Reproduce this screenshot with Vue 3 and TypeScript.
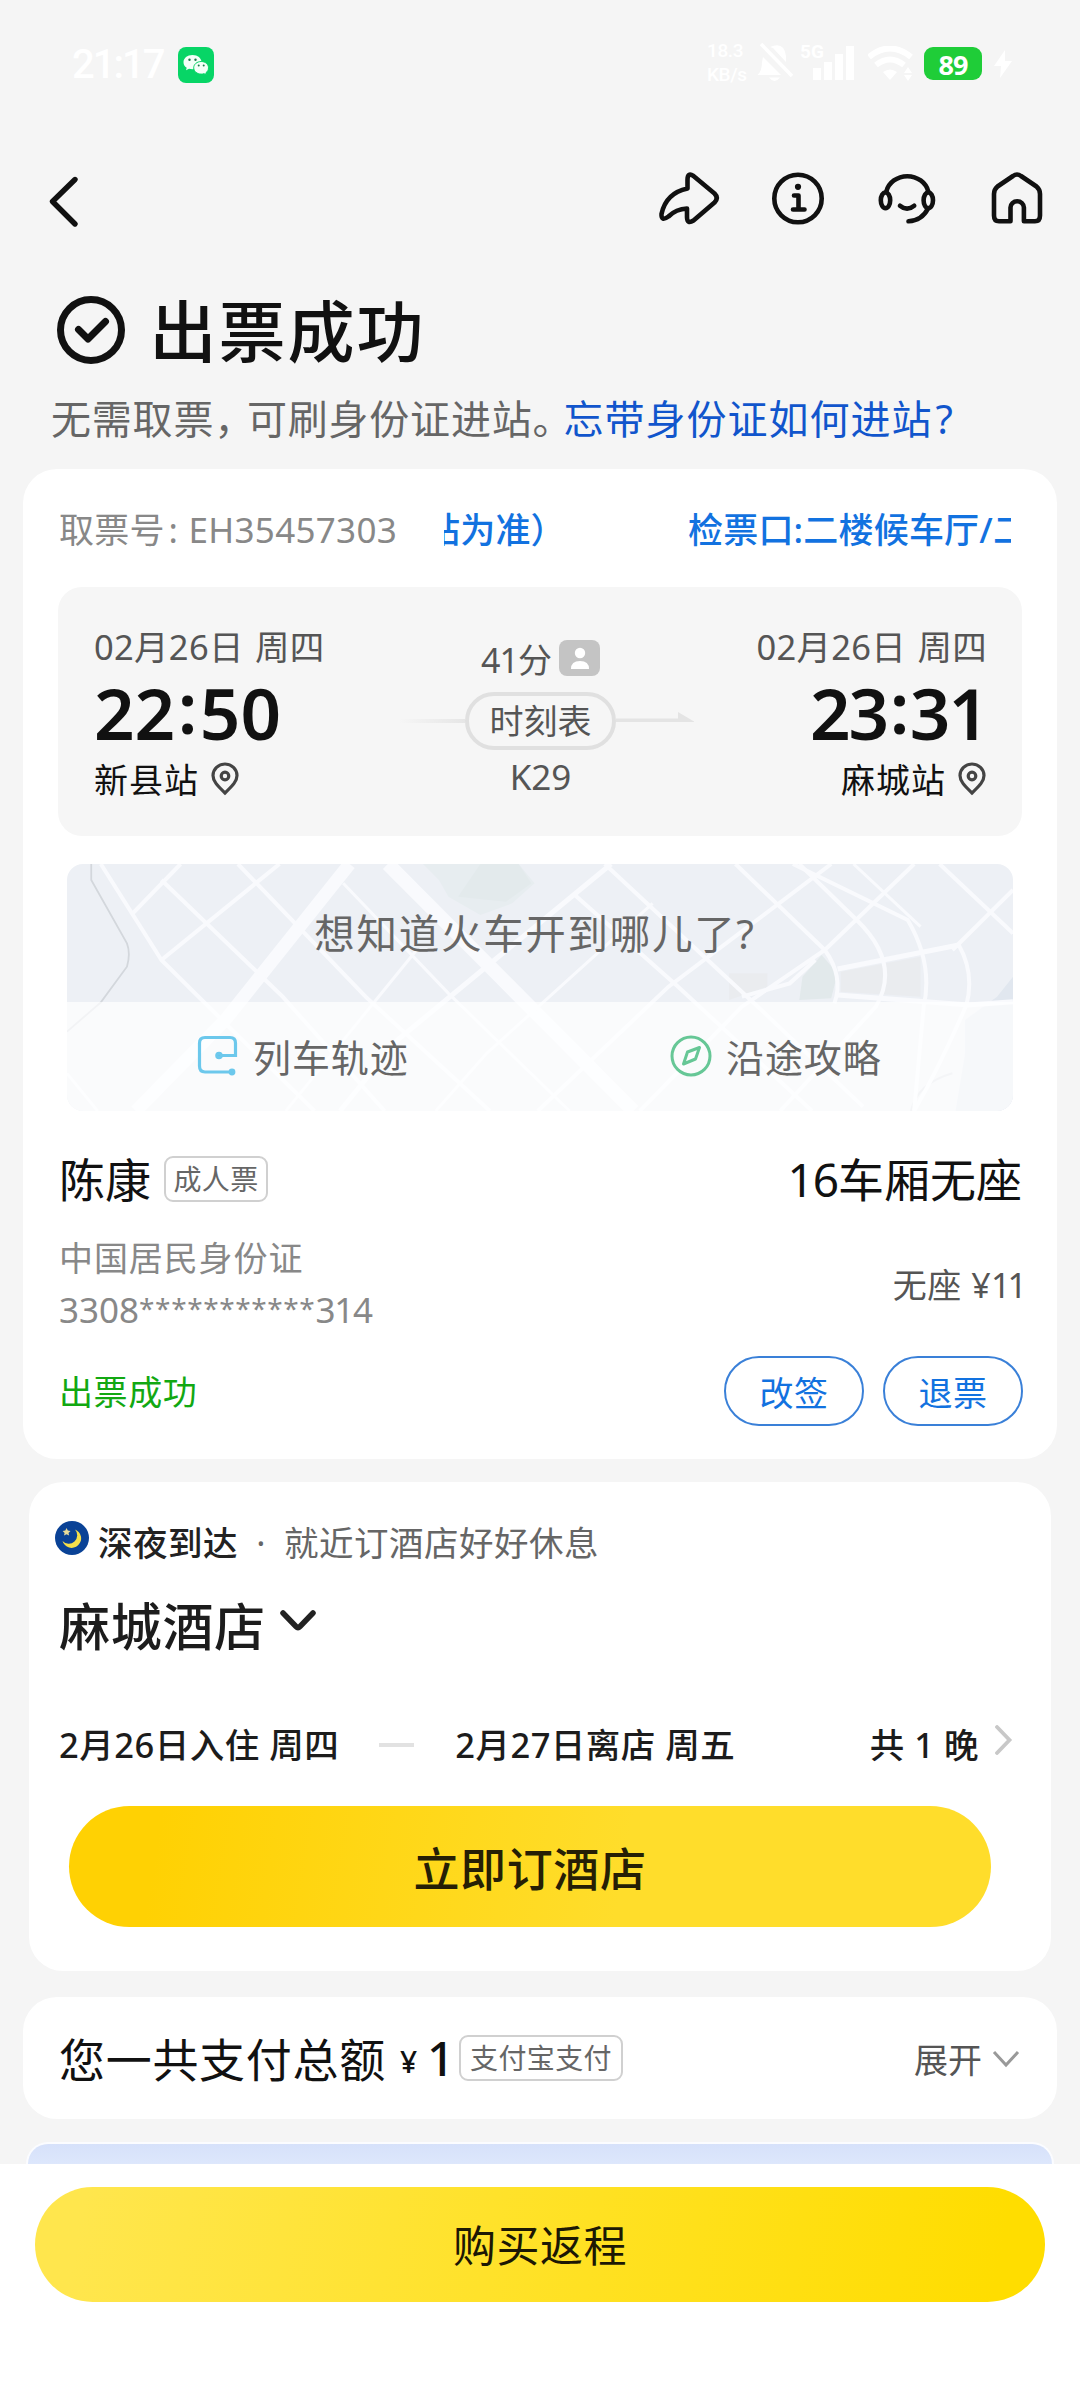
<script setup lang="ts">
interface Stop {
  date: string
  hour: string
  minute: string
  station: string
}

interface Road {
  d: string
  w: number
}

const departure: Stop = { date: '02月26日 周四', hour: '22', minute: '50', station: '新县站' }
const arrival: Stop = { date: '02月26日 周四', hour: '23', minute: '31', station: '麻城站' }

const actions: string[] = ['改签', '退票']

const signalBars: number[] = [12, 18, 26, 34]

const roads: Road[] = [
  { d: 'M485 72L290 540L150 813', w: 13 },
  { d: 'M545 72L700 370L930 813', w: 14 },
  { d: 'M95 72L190 360L285 540L430 813', w: 4 },
  { d: 'M220 72L145 220', w: 4 },
  { d: 'M375 72L190 360', w: 4 },
  { d: 'M190 120L380 470L540 813', w: 4 },
  { d: 'M310 72L510 470L705 813', w: 4 },
  { d: 'M475 130L640 460L830 813', w: 3 },
  { d: 'M590 330L385 813', w: 3 },
  { d: 'M895 72L560 600L470 813', w: 5 },
  { d: 'M960 190L700 640L620 813', w: 3 },
  { d: 'M835 160L1000 440L1210 813', w: 4 },
  { d: 'M885 72L1125 500L1290 800', w: 4 },
  { d: 'M1090 72L1230 330', w: 4 },
  { d: 'M1240 72L985 440L780 813', w: 4 },
  { d: 'M1370 72L1230 330L1100 500L940 813', w: 4 },
  { d: 'M1180 72L1360 240Q1400 370 1385 500L1370 813', w: 4 },
  { d: 'M1190 72L1280 240Q1350 370 1310 500L1160 813', w: 4 },
  { d: 'M1275 72L1380 260', w: 3 },
  { d: 'M1410 72L1525 280', w: 4 },
  { d: 'M1525 150L1430 330', w: 4 },
  { d: 'M42 700L90 813', w: 3 },
  { d: 'M1250 387L1440 315', w: 5 },
  { d: 'M1250 465L1455 495L1525 485', w: 5 },
  { d: 'M1440 315Q1465 400 1452 495Q1410 680 1370 813', w: 4 },
  { d: 'M1230 330Q1260 410 1245 490', w: 4 },
  { d: 'M1100 470L1175 430L1215 360', w: 4 },
]
</script>

<template>
  <div class="page">
    <header class="status">
      <div class="status-left">
        <span class="clock">21:17</span>
        <svg class="wechat" viewBox="0 0 36 36">
          <rect width="36" height="36" rx="8" fill="#07d566" />
          <path d="M14.5 8C9.300 8 5.500 11.200 5.500 15.200c0 2.300 1.200 4.200 3.200 5.500l-.7 2.500 3-1.500c1 .3 2.300.5 3.500.5 5.200 0 9-3 9-7S19.700 8 14.500 8z" fill="#f4fff8" />
          <path d="M23.200 14.500c-4.200 0-7.500 2.800-7.500 6.300s3.300 6.300 7.500 6.300c1 0 1.900-.1 2.800-.4l2.400 1.200-.6-2c1.700-1.200 2.700-3 2.700-5.100 0-3.500-3.100-6.300-7.300-6.300z" fill="#f4fff8" stroke="#07d566" stroke-width="1" />
          <g fill="#1c7a4a"><circle cx="11.500" cy="12.700" r="1.200" /><circle cx="17.500" cy="12.700" r="1.200" /><circle cx="20.700" cy="18.600" r="1" /><circle cx="25.700" cy="18.600" r="1" /></g>
        </svg>
      </div>
      <div class="status-right">
        <div class="speed"><span>18.3</span><span>KB/s</span></div>
        <svg class="bell" viewBox="757 42 38 42">
          <path d="M770 47Q784 41 786 56V62L773 48M763 57L781 75H757.500Q762 71 762 62zM769 77.500h11q-5.500 7-11 0z" fill="#fff" />
          <path d="M761 44L792 76" stroke="#fff" stroke-width="3.500" />
        </svg>
        <div class="signal">
          <span class="net">5G</span>
          <div class="bars">
            <i v-for="h in signalBars" :key="h" :style="{ height: h + 'px' }"></i>
          </div>
        </div>
        <svg class="wifi" viewBox="868 46 46 36">
          <path d="M869 57Q890 40 911 57M876 65Q890 54 904 65" fill="none" stroke="#fff" stroke-width="6" />
          <path d="M883 72Q890 67 897 72L890 80z" fill="#fff" />
          <path d="M904 73l4-6 4 6zM904 75l4 6 4-6z" fill="#fff" />
        </svg>
        <span class="battery">89</span>
        <svg class="bolt" viewBox="0 0 18 28"><path d="M11 0L0 16h7L6 28L18 11h-7z" fill="#fff" /></svg>
      </div>
    </header>

    <nav class="nav">
      <svg class="back" viewBox="48 174 34 54"><path d="M76 179.500L53.500 201.500L76 224" /></svg>
      <div class="nav-icons">
        <svg width="68" height="62" viewBox="655 168 68 62"><path d="M687.500 188.500V180Q687.500 172 693.500 176L714.500 193.500Q719 198 714.500 202.500L693.500 220.500Q687 224.500 687 217V208.500Q676 209 668.500 216.500Q661 222 661.500 214Q666 193 687.500 188.500Z" /></svg>
        <svg width="60" height="62" viewBox="767.500 168 60 62"><circle cx="797.500" cy="198.500" r="23.700" /><circle cx="797.500" cy="186.800" r="3.100" class="dot" /><path d="M793.500 195.500h4.500v14M792.500 209.500h11.500" /></svg>
        <svg width="64" height="62" viewBox="875.500 168 64 62"><path d="M886.800 191.500a21.600 20 0 0 1 42 0M900.500 205.700q7 6 14.200 0M928.500 208.500q-6 12-19.500 12.800" /><ellipse cx="886" cy="200.300" rx="4.700" ry="7.800" /><ellipse cx="928.800" cy="200.300" rx="4.700" ry="7.800" /></svg>
        <svg width="60" height="62" viewBox="986.500 168 60 62"><path d="M1012.500 176L997 186.500Q993.500 189.500 993.500 194V215.500Q993.500 221.300 998.500 221.300H1010V207.500a6.700 6.200 0 0 1 13.400 0V221.300H1034.500Q1039.500 221.300 1039.500 215.500V194Q1039.500 189.500 1036 186.500L1020.500 176Q1016.500 173 1012.500 176Z" /></svg>
      </div>
    </nav>

    <section class="hero">
      <div class="hero-title">
        <svg width="70" height="70" viewBox="0 0 70 70"><circle cx="35" cy="35" r="30.500" /><path d="M22.500 34.500L32 44L49.500 26.500" /></svg>
        <h1>出票成功</h1>
      </div>
      <p class="hero-sub"><span>无需取票<span class="comma">，</span>可刷身份证进站<span class="stop">。</span></span><a>忘带身份证如何进站<b>?</b></a></p>
    </section>

    <section class="card ticket">
      <div class="pickup">
        <span class="pickup-no">取票号<i>:</i> <b>EH35457303</b></span>
        <div class="marquee">
          <span class="m-first">站为准）</span>
          <span>检票口:二楼候车厅/二楼</span>
        </div>
      </div>

      <div class="trip">
        <div class="stop-col">
          <span class="date">{{ departure.date }}</span>
          <span class="time">{{ departure.hour }}<i>:</i>{{ departure.minute }}</span>
          <span class="station">{{ departure.station }}<svg width="28" height="34" viewBox="0 0 28 34"><path d="M14 31C8 25 2 20 2 13.500a12 11.500 0 0 1 24 0C26 20 20 25 14 31z" /><circle cx="14" cy="14" r="3.800" /></svg></span>
        </div>
        <div class="mid">
          <div class="dur"><span><b>41</b>分</span>
            <svg width="41" height="36" viewBox="0 0 41 36"><rect width="41" height="36" rx="8" fill="#c4c4c4" /><circle cx="21" cy="13" r="5.200" fill="#fff" /><path d="M12 29q0-8 9-8t9 8z" fill="#fff" /></svg>
          </div>
          <div class="pill-row">
            <i class="line-left"></i>
            <span class="pill">时刻表</span>
            <svg width="78" height="16" viewBox="0 0 78 16"><path d="M0 8.500h62V2L78 11.500V12H0z" fill="#e4e4e4" /></svg>
          </div>
          <span class="train">K29</span>
        </div>
        <div class="stop-col right">
          <span class="date">{{ arrival.date }}</span>
          <span class="time">{{ arrival.hour }}<i>:</i>{{ arrival.minute }}</span>
          <span class="station">{{ arrival.station }}<svg width="28" height="34" viewBox="0 0 28 34"><path d="M14 31C8 25 2 20 2 13.500a12 11.500 0 0 1 24 0C26 20 20 25 14 31z" /><circle cx="14" cy="14" r="3.800" /></svg></span>
        </div>
      </div>

      <div class="map">
        <svg class="map-bg" viewBox="42 72 1483 741" preserveAspectRatio="none">
          <rect x="42" y="72" width="1483" height="741" fill="#edf0f5" />
          <path d="M600 72H750L775 130L740 190L690 225L640 170L625 120z" fill="#e7edf0" />
          <path d="M690 72H750L770 130L730 185L655 170z" fill="#e3eaec" />
          <path d="M1225 345L1250 400L1240 475L1190 480L1195 410z" fill="#e2e9eb" />
          <path d="M1080 400h60v40l-60 40zM1255 395L1380 350V470L1255 455z" fill="#eaecef" />
          <path d="M1525 410L1500 470L1450 540V640L1435 813H1525z" fill="#e1e7ef" />
          <path d="M1430 700Q1375 730 1365 813" fill="none" stroke="#d9dee4" stroke-width="2" vector-effect="non-scaling-stroke" />
          <path v-for="r in roads" :key="r.d" :d="r.d" :stroke-width="r.w" fill="none" stroke="#f9fafd" vector-effect="non-scaling-stroke" />
          <path d="M80 72V120L136 310Q142 340 136 380L95 487L42 575" fill="none" stroke="#d3d7dc" stroke-width="1.800" vector-effect="non-scaling-stroke" />
        </svg>
        <div class="map-title">想知道火车开到哪儿了?</div>
        <div class="map-links">
          <span class="map-link">
            <svg width="42" height="42" viewBox="0 0 42 42" fill="none" stroke="#6cc8ec" stroke-width="3.200"><path d="M22 20.500H38.500V8Q38.500 2.500 33 2.500H8Q2.500 2.500 2.500 8V31Q2.500 37 8 37H34" /><circle cx="22" cy="20.500" r="2.200" fill="#5abdf0" /><circle cx="35" cy="37" r="1.800" fill="#5abdf0" /></svg>
            列车轨迹
          </span>
          <span class="map-link">
            <svg width="42" height="42" viewBox="0 0 42 42" fill="none" stroke="#66c796" stroke-width="3"><circle cx="21" cy="21" r="19" /><path d="M29.500 12.500L25.500 24L13.500 29L17.500 17z" stroke-linejoin="round" /></svg>
            沿途攻略
          </span>
        </div>
      </div>

      <div class="pax">
        <span class="name">陈康</span><span class="tag">成人票</span>
        <span class="seat"><b>16</b>车厢无座</span>
      </div>
      <div class="idrow">
        <div class="idcol"><span class="idtype">中国居民身份证</span><span>3308<em>***********</em><b>314</b></span></div>
        <span class="fare">无座 ¥<b>11</b></span>
      </div>
      <div class="state">
        <span class="ok">出票成功</span>
        <div class="btns"><button v-for="a in actions" :key="a">{{ a }}</button></div>
      </div>
    </section>

    <section class="card hotel">
      <div class="night">
        <svg width="34" height="34" viewBox="0 0 34 34"><circle cx="17" cy="17" r="17" fill="#0a4296" /><path d="M20 8.500A9.500 9.500 0 1 1 7.500 20A8 8 0 0 0 20 8.500z" fill="#f5df4a" /><path d="M11.500 7l1.300 2.600 2.700.3-2 2 .6 2.700-2.600-1.400-2.500 1.400.6-2.700-2-2 2.700-.3z" fill="#e8dc9a" /></svg>
        <strong>深夜到达</strong><span class="sep">·</span><span>就近订酒店好好休息</span>
      </div>
      <div class="city">麻城酒店<svg width="36" height="22" viewBox="0 0 36 22"><path d="M3 3L16 16.500Q18 18.500 20 16.500L33 3" /></svg></div>
      <div class="dates">
        <span>2月26日入住 周四</span><i></i><span>2月27日离店 周五</span>
        <span class="nights">共 1 晚</span><svg width="18" height="30" viewBox="0 0 18 30"><path d="M2 2L14.500 15L2 28" /></svg>
      </div>
      <button class="book">立即订酒店</button>
    </section>

    <section class="card pay">
      <span class="total">您一共支付总额</span><span class="yen">¥</span><span class="amount">1</span><span class="tag">支付宝支付</span>
      <span class="expand">展开</span><svg width="28" height="18" viewBox="0 0 28 18"><path d="M2 2L14 15L26 2" /></svg>
    </section>

    <div class="peek"></div>

    <footer class="footer"><button>购买返程</button></footer>
  </div>
</template>

<style>
body {
  background: #f5f5f5;
}
</style>

<style scoped>
* {
  box-sizing: border-box;
}
.page {
  width: 1080px;
  height: 2400px;
  overflow: hidden;
  display: flex;
  flex-direction: column;
  background: #f5f5f5;
  color: #111;
  font-family: "Noto Sans", "Noto Sans CJK SC", sans-serif;
  white-space: nowrap;
}
svg {
  display: block;
  flex: none;
}
button {
  font-family: inherit;
  padding: 0;
  border: 0;
}
i, em {
  font-style: normal;
}
b {
  font-weight: inherit;
}

.status {
  height: 130px;
  padding: 0 68px 0 72px;
  display: flex;
  justify-content: space-between;
  color: #fff;
}
.status-left {
  display: flex;
  padding-top: 47px;
}
.clock {
  width: 106px;
  font: 500 40px/36px Roboto, sans-serif;
  letter-spacing: -2px;
}
.wechat {
  width: 36px;
  height: 36px;
}
.status-right {
  display: flex;
  padding-top: 42px;
}
.speed {
  width: 50px;
  display: flex;
  flex-direction: column;
  font: 500 19px/24px Roboto, sans-serif;
  letter-spacing: -0.400px;
  margin-top: -3px;
}
.bell {
  width: 38px;
  height: 42px;
}
.signal {
  width: 62px;
  margin-left: 5px;
  height: 38px;
  display: flex;
}
.net {
  width: 13px;
  font: 700 19px/19px Roboto, sans-serif;
}
.bars {
  display: flex;
  align-items: flex-end;
  gap: 3px;
}
.bars i {
  width: 8px;
  background: #fff;
}
.wifi {
  width: 46px;
  height: 36px;
  margin: 4px 0 0 6px;
}
.battery {
  width: 58px;
  height: 33px;
  margin: 5px 0 0 10px;
  border-radius: 9px;
  background: #1fcd38;
  text-align: center;
  font: 700 27px/35px "Noto Sans", sans-serif;
  letter-spacing: -1px;
}
.bolt {
  width: 18px;
  height: 28px;
  margin: 8px 0 0 12px;
}

.nav {
  height: 150px;
  padding: 38px 33.500px 0 47px;
  display: flex;
  justify-content: space-between;
}
.back {
  width: 34px;
  height: 54px;
  margin-top: 6px;
}
.nav svg {
  fill: none;
  stroke: #111;
  stroke-width: 4.600;
  stroke-linecap: round;
  stroke-linejoin: round;
}
.nav .back {
  stroke-width: 5.400;
}
.nav .dot {
  fill: #111;
  stroke: none;
}
.nav-icons {
  display: flex;
  gap: 47.500px;
}
.nav-icons svg:first-child {
  margin-right: -2.500px;
}

.hero {
  height: 189px;
}
.hero-title {
  display: flex;
  align-items: center;
  height: 102px;
  padding-left: 55.500px;
}
.hero-title svg {
  fill: none;
  stroke: #111;
  stroke-width: 7;
  stroke-linecap: round;
  stroke-linejoin: round;
  margin-top: -3px;
}
h1 {
  margin: 0 0 0 24px;
  font-size: 67px;
  font-weight: 500;
  line-height: 102px;
  letter-spacing: 2px;
}
.hero-sub {
  margin: 8px 0 0 51px;
  font-size: 40px;
  line-height: 57px;
  letter-spacing: 0.800px;
  color: #666;
  display: flex;
}
.comma {
  letter-spacing: -7.300px;
}
.stop {
  letter-spacing: -9px;
}
.hero-sub a {
  color: #1155cc;
  letter-spacing: 1px;
}
.hero-sub b {
  margin-left: 3px;
}

.card {
  background: #fff;
  border-radius: 34px;
  flex: none;
}
.ticket {
  margin: 0 23px;
  height: 990px;
  padding: 36px 35px 0;
}
.pickup {
  height: 50px;
  display: flex;
  font-size: 35px;
  line-height: 50px;
  letter-spacing: 0.200px;
  padding-left: 1px;
}
.pickup-no {
  width: 385px;
  color: #888;
}
.pickup-no i {
  margin: 0 1px 0 4px;
}
.pickup-no b {
  letter-spacing: 0.300px;
}
.marquee {
  width: 567px;
  overflow: hidden;
  display: flex;
  color: #1272e0;
  font-weight: 500;
}
.m-first {
  flex: none;
  width: 263px;
  margin-left: -19px;
}

.trip {
  margin-top: 32px;
  height: 249px;
  border-radius: 24px;
  background: #f6f6f6;
  display: flex;
  justify-content: space-between;
  padding: 36px 35px 0 36px;
}
.stop-col {
  display: flex;
  flex-direction: column;
  width: 240px;
}
.right {
  align-items: flex-end;
}
.date {
  font-size: 34.500px;
  line-height: 48px;
  letter-spacing: 0.300px;
  word-spacing: 2px;
  color: #555;
}
.time {
  font-size: 71px;
  font-weight: 600;
  line-height: 76px;
  height: 83px;
  padding-top: 4px;
}
.time i {
  position: relative;
  top: -6px;
  margin: 0 2.500px;
}
.right .time {
  letter-spacing: -2px;
}
.station {
  display: flex;
  align-items: center;
  font-size: 34px;
  letter-spacing: 1px;
  line-height: 52px;
}
.station svg {
  margin: -2px 0 0 12px;
  fill: none;
  stroke: #444;
  stroke-width: 3.200;
}
.right .station {
  padding-right: 1px;
}
.mid {
  width: 300px;
  display: flex;
  flex-direction: column;
  align-items: center;
}
.dur {
  display: flex;
  align-items: center;
  gap: 7px;
  height: 50px;
  margin-top: 12px;
  font-size: 34px;
  line-height: 50px;
  color: #555;
}
.dur b {
  letter-spacing: -1px;
}
.dur svg {
  margin-top: -4px;
}
.pill-row {
  display: flex;
  align-items: center;
  height: 58px;
  margin-top: 7px;
}
.line-left {
  width: 78px;
  height: 4px;
  background: linear-gradient(90deg, #f6f6f6 15%, #e6e6e6);
}
.pill {
  width: 151px;
  height: 58px;
  border: 4px solid #e0e0e0;
  border-radius: 29px;
  text-align: center;
  font-size: 34px;
  line-height: 51px;
  color: #555;
}
.pill-row svg {
  margin-top: -6px;
}
.train {
  font-size: 35px;
  line-height: 50px;
  color: #555;
  margin-top: 2px;
}

.map {
  position: relative;
  margin: 28px 9px 0;
  height: 247px;
  border-radius: 16px;
  overflow: hidden;
  color: #666;
}
.map-bg {
  position: absolute;
  inset: 0;
  width: 100%;
  height: 100%;
}
.map-title {
  position: relative;
  height: 138px;
  padding-right: 10px;
  text-align: center;
  font-size: 40.500px;
  line-height: 140px;
  letter-spacing: 1.700px;
}
.map-links {
  position: relative;
  height: 109px;
  display: flex;
  background: rgba(255, 255, 255, 0.700);
}
.map-link {
  width: 473px;
  display: flex;
  padding: 0 0 2px 130px;
  align-items: center;
  gap: 14px;
  font-size: 38px;
  letter-spacing: 0.900px;
}

.tag {
  border: 2px solid #d0d0d0;
  border-radius: 9px;
  height: 46px;
  line-height: 43px;
  font-size: 28px;
  letter-spacing: 0.400px;
  text-align: center;
  color: #666;
}
.pax {
  margin-top: 37px;
  height: 62px;
  display: flex;
  align-items: center;
  font-size: 46px;
  line-height: 62px;
}
.name {
  padding-left: 1px;
  width: 106px;
}
.pax .tag {
  width: 104px;
}
.seat {
  margin-left: auto;
}
.seat b {
  letter-spacing: -1px;
}
.idrow {
  margin-top: 23px;
  height: 104px;
  display: flex;
  align-items: center;
  justify-content: space-between;
  font-size: 35px;
}
.idcol {
  display: flex;
  flex-direction: column;
  line-height: 52px;
  color: #888;
  padding-left: 1px;
}
.idtype {
  font-size: 34px;
  letter-spacing: 0.900px;
}
.idcol em {
  position: relative;
  top: -4px;
  font-size: 28px;
  letter-spacing: 0.600px;
}
.idcol b {
  letter-spacing: -1.200px;
}
.fare {
  margin: 0 -2px 4px 0;
  font-size: 34px;
  letter-spacing: 0.500px;
  color: #555;
}
.fare b {
  letter-spacing: -3px;
}
.state {
  margin-top: 19px;
  height: 70px;
  display: flex;
  align-items: center;
  justify-content: space-between;
  font-size: 34px;
  letter-spacing: 0.600px;
}
.ok {
  color: #12a812;
  padding: 0 0 2px 1px;
}
.btns {
  display: flex;
  gap: 19px;
  margin-right: -1px;
}
.btns button {
  width: 140px;
  height: 70px;
  border: 2px solid #3a80d8;
  border-radius: 35px;
  background: #fff;
  color: #1272e0;
  font-size: 34px;
  letter-spacing: 0.600px;
  line-height: 70px;
}

.hotel {
  margin: 23px 29px 0;
  height: 489px;
  padding: 36px 26px 0 30px;
}
.night {
  display: flex;
  height: 50px;
  font-size: 34.500px;
  letter-spacing: 0.500px;
  line-height: 50px;
  color: #666;
}
.night svg {
  margin: 3px 9px 0 -4px;
}
.night strong {
  font-weight: 500;
  color: #222;
}
.sep {
  width: 46px;
  text-align: center;
}
.city {
  margin-top: 22px;
  display: flex;
  height: 72px;
  line-height: 72px;
  font-size: 51px;
  font-weight: 500;
  letter-spacing: 0.700px;
  color: #1c1c1c;
}
.city svg {
  margin: 20px 0 0 14px;
  fill: none;
  stroke: #222;
  stroke-width: 5.500;
  stroke-linecap: round;
}
.dates {
  margin-top: 58px;
  height: 50px;
  display: flex;
  align-items: center;
  font-size: 34.500px;
  line-height: 50px;
  letter-spacing: 0.500px;
  font-weight: 500;
  color: #1c1c1c;
}
.dates i {
  width: 35px;
  height: 4px;
  margin: 0 41px 0 40px;
  background: #e2e2e2;
}
.nights {
  margin-left: auto;
}
.dates svg {
  margin: -10px 12px 0 16px;
  fill: none;
  stroke: #c8c8c8;
  stroke-width: 3.800;
  stroke-linecap: round;
}
.book {
  display: block;
  margin: 36px 0 0 10px;
  width: 922px;
  height: 121px;
  border-radius: 61px;
  background: linear-gradient(100deg, #ffd103 10%, #ffdd2b 60%);
  color: #261f05;
  font-size: 46px;
  font-weight: 500;
  line-height: 124px;
  letter-spacing: 0.600px;
}

.pay {
  margin: 26px 23px 0;
  height: 122px;
  padding: 0 37px 0 36px;
  display: flex;
  align-items: center;
}
.total {
  font-size: 46px;
  letter-spacing: 0.700px;
  width: 341px;
  padding-bottom: 3px;
}
.yen {
  width: 27px;
  font-size: 30px;
  font-weight: 500;
  padding-top: 6px;
}
.amount {
  width: 32px;
  font-size: 48px;
  font-weight: 500;
  padding-bottom: 2px;
}
.pay .tag {
  width: 164px;
}
.expand {
  margin-left: auto;
  font-size: 34px;
  color: #555;
}
.pay svg {
  margin: 2px 0 0 10px;
  fill: none;
  stroke: #999;
  stroke-width: 3;
}

.peek {
  flex: none;
  margin: 23px 26px 0;
  height: 22px;
  border: 2px solid #fbfcff;
  border-bottom: 0;
  border-radius: 34px 34px 0 0;
  background: linear-gradient(#d6e1fa, #dde7fc);
}
.footer {
  flex: 1;
  background: #fff;
  padding: 23px 35px 0;
}
.footer button {
  display: block;
  width: 1010px;
  height: 115px;
  border-radius: 58px;
  background: linear-gradient(100deg, #ffe64d 5%, #ffdd00 95%);
  color: #1c1804;
  font-size: 43px;
  line-height: 117px;
  letter-spacing: 0.500px;
}
</style>
